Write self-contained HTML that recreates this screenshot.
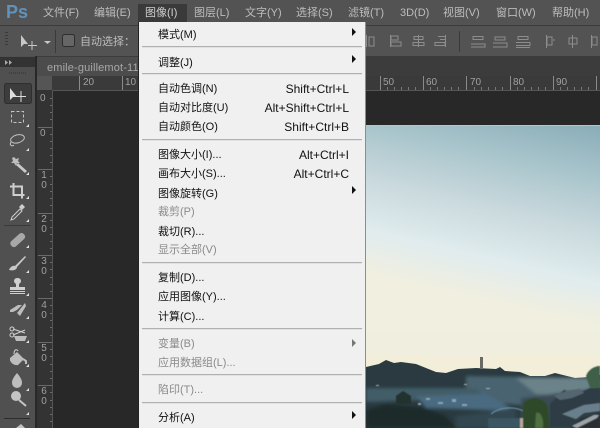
<!DOCTYPE html>
<html><head><meta charset="utf-8">
<style>
html,body{margin:0;padding:0;background:#282828}
#r{position:relative;width:600px;height:428px;overflow:hidden;background:#282828;font-family:"Liberation Sans","Noto Sans CJK SC",sans-serif}
.a{position:absolute}
.t{position:absolute;white-space:nowrap;line-height:14px;height:14px}
.m{font-size:11px;color:#bdbdbd}
.i{font-size:11px;color:#111;left:158px}
.d{color:#8a8a8a}
.s{font-size:12px;color:#111;right:251px}
.sep{position:absolute;left:142px;width:220px;height:1px;background:#b0b0b0;border-bottom:1px solid #e2e2e2}
.ar{position:absolute;left:352px;width:0;height:0;border-left:4px solid #111;border-top:4px solid transparent;border-bottom:4px solid transparent}
.rt{position:absolute;font-size:10px;color:#a0a0a0;line-height:11px;font-family:"Liberation Sans",sans-serif}
</style></head><body><div id="r">
<!-- menu bar -->
<div class="a" style="left:0;top:0;width:600px;height:25px;background:#535353"></div>
<div class="a" style="left:0;top:25px;width:600px;height:1px;background:#3c3c3c"></div>
<div class="a" style="left:0;top:26px;width:600px;height:31px;background:#535353"></div>
<div class="t" style="left:6px;top:2px;height:20px;line-height:20px;font-size:18px;font-weight:bold;color:#5f93bd">Ps</div>
<div class="a" style="left:138px;top:4px;width:49px;height:18px;background:#3a3a3a"></div>
<div class="t m" style="left:43px;top:6px">文件(F)</div>
<div class="t m" style="left:94px;top:6px">编辑(E)</div>
<div class="t m" style="left:145px;top:6px;color:#cfcfcf">图像(I)</div>
<div class="t m" style="left:194px;top:6px">图层(L)</div>
<div class="t m" style="left:245px;top:6px">文字(Y)</div>
<div class="t m" style="left:296px;top:6px">选择(S)</div>
<div class="t m" style="left:348px;top:6px">滤镜(T)</div>
<div class="t m" style="left:400px;top:6px">3D(D)</div>
<div class="t m" style="left:443px;top:6px">视图(V)</div>
<div class="t m" style="left:496px;top:6px">窗口(W)</div>
<div class="t m" style="left:552px;top:6px">帮助(H)</div>
<!-- options bar -->
<svg class="a" style="left:0;top:26px" width="600" height="30">
<g fill="#3a3a3a"><rect x="5" y="6" width="3" height="1"/><rect x="5" y="9" width="3" height="1"/><rect x="5" y="12" width="3" height="1"/><rect x="5" y="15" width="3" height="1"/><rect x="5" y="18" width="3" height="1"/></g>
<path d="M21 9v12l3-3 4 0z" fill="#c8c8c8"/>
<path d="M32 15v9M28 19.500h9" stroke="#c8c8c8" fill="none"/>
<path d="M44 15h7l-3.500 3z" fill="#c8c8c8"/>
<rect x="55" y="4" width="1" height="23" fill="#3a3a3a"/>
<rect x="62.500" y="8.500" width="12" height="12" rx="2" fill="#666" stroke="#2e2e2e"/>
<g stroke="#8d8d8d" fill="none">
<path d="M390.500 9v12M391 10h7v4h-7zM391 16h10v4h-10z"/>
<path d="M418.500 9v12M414 10.500h9v3h-9zM413 16.500h11v3h-11z"/>
<path d="M445.500 9v12M438 10.500h7M440 13.500h5M435 16.500h10v3h-10z"/>
<path d="M473 10.500h10v3h-10zM471 18h14v3h-14"/>
<path d="M495 14h10v-3h-10zM493 17h14v4h-14"/>
<path d="M518 10.500h10v3h-10zM516 16.500h14v3h-14M516 21.500h14"/>
<path d="M546.500 9v13M547 11h5v8h-5zM553 14h2"/>
<path d="M572.500 9v13M569 12h8v6h-8z"/>
<path d="M591.500 9v13M592 11h5v8h-5z"/>
<path d="M369 11h5v9h-5zM366.500 9v12"/>
</g>
<rect x="459" y="5" width="1" height="21" fill="#3a3a3a"/>
</svg>
<div class="t" style="left:80px;top:35px;font-size:11px;color:#bdbdbd">自动选择：</div>
<!-- tab row -->
<div class="a" style="left:0;top:56px;width:600px;height:20px;background:#3c3c3c"></div>
<div class="a" style="left:37px;top:57px;width:110px;height:19px;background:#4c4c4c"></div>
<div class="t" style="left:47px;top:61px;font-size:11px;letter-spacing:.15px;color:#a8a8a8">emile-guillemot-11</div>
<!-- toolbar -->
<div class="a" style="left:0;top:56px;width:35px;height:372px;background:#505050"></div>
<div class="a" style="left:0;top:57px;width:35px;height:10px;background:#333"></div>
<div class="a" style="left:35px;top:56px;width:2px;height:372px;background:#282828"></div>
<svg class="a" style="left:0;top:0" width="37" height="428">
<path d="M5 60l3 2.500-3 2.500zM9 60l3 2.500-3 2.500z" fill="#aaa"/>
<path d="M9 73h17" stroke="#2f2f2f" stroke-dasharray="1 1"/>
<rect x="4.500" y="83.500" width="27" height="20" rx="2" fill="#3c3c3c" stroke="#2f2f2f"/>
<path d="M10 88v12l3-3 4 0z" fill="#ddd"/>
<path d="M21 91v11M16 96.500h10" stroke="#ddd" fill="none"/>
<rect x="11.500" y="111.500" width="12" height="11" fill="none" stroke="#c4c4c4" stroke-dasharray="3 2"/>
<ellipse cx="17.500" cy="139" rx="7" ry="4" fill="none" stroke="#c4c4c4" transform="rotate(-15 17 139)"/>
<path d="M11 142c-2 3 1 5 3 3" fill="none" stroke="#c4c4c4"/>
<path d="M16 165l2-2 9 8-2 2z" fill="#c8c8c8"/>
<path d="M14 157l2 2 3-1-1 3 2 2-3 0-1 3-2-3-3 0 2-2-1-3z" fill="#bdbdbd"/>
<path d="M13.500 183v12h11M10 186.500h12v12" fill="none" stroke="#cfcfcf" stroke-width="2"/>
<path d="M12 217l8-8 2 2-8 8-3 1z" fill="none" stroke="#cfcfcf"/>
<path d="M19 207l3-3 3 3-3 3z" fill="#cfcfcf"/>
<rect x="4" y="225" width="27" height="1" fill="#3a3a3a"/>
<rect x="9" y="237" width="17" height="7" rx="3" fill="#a8a8a8" transform="rotate(-42 17 240)"/>
<path d="M9 270c1-3 4-5 6-4l10-10 1 1-9 10c0 3-4 4-8 3z" fill="#c8c8c8"/>
<rect x="14" y="278" width="7" height="6" rx="3" fill="#cfcfcf"/><rect x="16" y="283" width="3" height="4" fill="#cfcfcf"/><rect x="10" y="287" width="15" height="3" fill="#cfcfcf"/><rect x="10" y="291" width="15" height="1" fill="#cfcfcf"/><rect x="10" y="293" width="15" height="1" fill="#cfcfcf"/>
<path d="M10 310l8-5 4 0-5 5-4 2-3 0zM25 303l-8 10 3 3 6-10z" fill="#bdbdbd"/>
<path d="M13 329l12 4M13 335l12-5" stroke="#cfcfcf" fill="none"/><circle cx="12" cy="329" r="2" fill="none" stroke="#cfcfcf"/><circle cx="12" cy="335" r="2" fill="none" stroke="#cfcfcf"/><path d="M14 336h13l-2 5H16z" fill="#bdbdbd"/>
<path d="M10 358l7-6 7 7-6 6c-4 1-9-3-8-7z" fill="#bdbdbd"/><path d="M14 354c0-5 3-5 4-3" fill="none" stroke="#cfcfcf"/><path d="M23 359l3 2v3" stroke="#bdbdbd" fill="none" stroke-width="2"/>
<path d="M17 373c4 5 5 7 5 10a5 5 0 0 1-10 0c0-3 1-5 5-10z" fill="#bdbdbd"/>
<circle cx="16" cy="396" r="5" fill="#c4c4c4"/><path d="M19 400l7 6" stroke="#c4c4c4" stroke-width="2"/>
<rect x="4" y="418" width="26" height="1" fill="#2c2c2c"/>
<path d="M21 424l4 4h-9z" fill="#c4c4c4"/>
<g fill="#e0e0e0"><path d="M29 127h-3l3-3zM29 151h-3l3-3zM29 175h-3l3-3zM29 199h-3l3-3zM29 222h-3l3-3zM29 248h-3l3-3zM29 273h-3l3-3zM29 296h-3l3-3zM29 319h-3l3-3zM29 343h-3l3-3zM29 367h-3l3-3zM29 391h-3l3-3zM29 415h-3l3-3z"/></g>
</svg>
<!-- rulers -->
<div class="a" style="left:37px;top:76px;width:563px;height:14px;background:#3a3a3a"></div>
<div class="a" style="left:37px;top:76px;width:15px;height:14px;background:#555"></div>
<div class="a" style="left:37px;top:90px;width:563px;height:1px;background:#555"></div>
<div class="a" style="left:37px;top:90px;width:15px;height:338px;background:#333"></div>
<div class="a" style="left:52px;top:90px;width:1px;height:338px;background:#555"></div>
<div class="rt" style="left:83px;top:77px">20</div>
<div class="rt" style="left:125px;top:77px">10</div>
<div class="rt" style="left:383px;top:77px">50</div>
<div class="rt" style="left:426px;top:77px">60</div>
<div class="rt" style="left:470px;top:77px">70</div>
<div class="rt" style="left:513px;top:77px">80</div>
<div class="rt" style="left:556px;top:77px">90</div>
<svg class="a" style="left:0;top:0" width="600" height="428">
<g stroke="#8a8a8a" fill="none">
<path d="M79.500 76v14M122.500 76v14M380.500 76v14M423.500 76v14M466.500 76v14M510.500 76v14M553.500 76v14M596.500 76v14"/>
<path d="M38 127.500h14M38 169.500h14M38 213.500h14M38 255.500h14M38 298.500h14M38 342.500h14M38 385.500h14" stroke="#6a6a6a"/>
<path d="M50 98.500h2M50 105.500h2M50 112.500h2M50 119.500h2M50 134.500h2M50 141.500h2M50 148.500h2M50 155.500h2M50 162.500h2M50 176.500h2M50 184.500h2M50 191.500h2M50 198.500h2M50 205.500h2M50 220.500h2M50 227.500h2M50 234.500h2M50 241.500h2M50 248.500h2M50 262.500h2M50 269.500h2M50 277.500h2M50 284.500h2M50 291.500h2M50 305.500h2M50 313.500h2M50 320.500h2M50 327.500h2M50 335.500h2M50 349.500h2M50 356.500h2M50 364.500h2M50 371.500h2M50 378.500h2M50 392.500h2M50 400.500h2M50 407.500h2M50 414.500h2M50 421.500h2" stroke="#6a6a6a"/>
<path d="M387.500 87v3M394.500 87v3M401.500 87v3M408.500 87v3M415.500 87v3M430.500 87v3M437.500 87v3M444.500 87v3M451.500 87v3M458.500 87v3M474.500 87v3M481.500 87v3M488.500 87v3M495.500 87v3M502.500 87v3M517.500 87v3M524.500 87v3M531.500 87v3M538.500 87v3M545.500 87v3M560.500 87v3M567.500 87v3M574.500 87v3M581.500 87v3M588.500 87v3" stroke="#777"/>
</g></svg>
<div class="rt" style="left:40px;top:93px">0</div>
<div class="rt" style="left:40px;top:128px">0</div>
<div class="rt" style="left:40px;top:171px;width:8px;text-align:center;line-height:10px">1<br>0</div>
<div class="rt" style="left:40px;top:215px;width:8px;text-align:center;line-height:10px">2<br>0</div>
<div class="rt" style="left:40px;top:257px;width:8px;text-align:center;line-height:10px">3<br>0</div>
<div class="rt" style="left:40px;top:301px;width:8px;text-align:center;line-height:10px">4<br>0</div>
<div class="rt" style="left:40px;top:344px;width:8px;text-align:center;line-height:10px">5<br>0</div>
<div class="rt" style="left:40px;top:387px;width:8px;text-align:center;line-height:10px">6<br>0</div>
<!-- photo: svg origin (366,126) -->
<svg class="a" style="left:366px;top:126px" width="234" height="302">
<defs>
<linearGradient id="g" gradientUnits="userSpaceOnUse" x1="234" y1="0" x2="190" y2="190">
<stop offset="0" stop-color="#8aadb8"/><stop offset=".27" stop-color="#a9c5cc"/><stop offset=".52" stop-color="#c8d8dc"/><stop offset=".79" stop-color="#e0ecee"/><stop offset="1" stop-color="#f0efe0"/></linearGradient>
<linearGradient id="v" x1="0" y1="0" x2="0" y2="1"><stop offset="0" stop-color="#f0efe0" stop-opacity="0"/><stop offset="1" stop-color="#f2eeda"/></linearGradient>
<clipPath id="hill"><path d="M0 241L13 238 20 234 28 237 35 236 50 238 60 242 70 246 80 247 92 243 110 242 130 243 134 241 139 245 154 246 164 250 179 250 189 247 209 252 224 251 234 249V302H0z"/></clipPath>
<filter id="b" x="-5%" y="-5%" width="110%" height="110%"><feGaussianBlur stdDeviation="1.500"/></filter>
<filter id="b2" x="-5%" y="-5%" width="110%" height="110%"><feGaussianBlur stdDeviation=".6"/></filter>
</defs>
<rect width="234" height="302" fill="url(#g)"/>
<rect y="160" width="234" height="142" fill="url(#v)"/>
<rect y="230" width="234" height="30" fill="#f2eeda"/>
<g clip-path="url(#hill)">
<rect y="230" width="234" height="72" fill="#2a3a40"/>
<g filter="url(#b)">
<path d="M100 250L234 252V285L100 275z" fill="#4a6470"/>
<path d="M150 252L234 252V272L170 268z" fill="#6a8288"/>
<path d="M0 262H110L120 272 0 276z" fill="#435d68"/>
<path d="M50 270L120 268 150 285 60 282z" fill="#4a6a80"/>
<path d="M0 284L20 278 60 282 80 290 90 302H0z" fill="#1e2a2c"/>
<path d="M90 290L150 282V302H90z" fill="#30474f"/>
<path d="M155 272L234 262V302H155z" fill="#3b4c54"/>
</g>
<g filter="url(#b2)">
<path d="M30 270l7-5 8 5v8H30z" fill="#24302f"/>
<path d="M125 288c7-6 22-9 34-2" fill="none" stroke="#6f98aa"/>
<path d="M122 292h34v10h-34z" fill="#3a5462"/>
<path d="M157 278c8-9 21-7 25 3l2 21h-28z" fill="#2e4a2c"/>
<path d="M170 287c4-2 8 4 7 15h-8z" fill="#4f7040"/>
<path d="M154 292h3v10h-3z" fill="#b8a89a"/>
<path d="M184 278l14-14 14 4 12-6 10-1v40h-50z" fill="#2f3c44"/>
<path d="M196 288l22-9 16-2v8l-16 2-8 6z" fill="#6b7f8c"/>
<path d="M204 302l12-10 18-5v15z" fill="#2b2e30"/>
<path d="M206 300l22-11 5 0-2 3-20 10z" fill="#9aa4a8"/>
<path d="M188 270l12-5 14-2 4 4-12 5-12 2z" fill="#54666f"/>
<g fill="#8ba6b8"><rect x="60" y="272" width="4" height="2"/><rect x="72" y="276" width="5" height="2"/><rect x="86" y="273" width="4" height="3"/><rect x="96" y="278" width="5" height="2"/><rect x="52" y="277" width="3" height="2"/></g>
<g fill="#a8b8bc"><rect x="10" y="259" width="3" height="1"/><rect x="98" y="258" width="3" height="1"/><rect x="120" y="262" width="4" height="1"/></g>
</g>
</g>
<path d="M220 250c2-6 8-10 14-10v22l-10 0z" fill="#3f5f48" filter="url(#b2)"/>
<rect x="114" y="231" width="3" height="12" fill="#6a6a64"/>
</svg>
<div class="a" style="left:365px;top:125px;width:235px;height:1px;background:#b9c4c6"></div>
<!-- menu -->
<div class="a" style="left:138px;top:22px;width:1px;height:406px;background:#222"></div>
<div class="a" style="left:139px;top:22px;width:226px;height:406px;background:#f0f0f0"></div>
<div class="a" style="left:365px;top:22px;width:1px;height:406px;background:#8c8c8c"></div>
<div class="t i" style="top:28px">模式(M)</div><div class="ar" style="top:28px"></div>
<div class="sep" style="top:46px"></div>
<div class="t i" style="top:56px">调整(J)</div><div class="ar" style="top:55px"></div>
<div class="sep" style="top:73px"></div>
<div class="t i" style="top:82px">自动色调(N)</div><div class="t s" style="top:82px">Shift+Ctrl+L</div>
<div class="t i" style="top:101px">自动对比度(U)</div><div class="t s" style="top:101px">Alt+Shift+Ctrl+L</div>
<div class="t i" style="top:120px">自动颜色(O)</div><div class="t s" style="top:120px">Shift+Ctrl+B</div>
<div class="sep" style="top:139px"></div>
<div class="t i" style="top:148px">图像大小(I)...</div><div class="t s" style="top:148px">Alt+Ctrl+I</div>
<div class="t i" style="top:167px">画布大小(S)...</div><div class="t s" style="top:167px">Alt+Ctrl+C</div>
<div class="t i" style="top:187px">图像旋转(G)</div><div class="ar" style="top:186px"></div>
<div class="t i d" style="top:205px">裁剪(P)</div>
<div class="t i" style="top:225px">裁切(R)...</div>
<div class="t i d" style="top:243px">显示全部(V)</div>
<div class="sep" style="top:262px"></div>
<div class="t i" style="top:271px">复制(D)...</div>
<div class="t i" style="top:290px">应用图像(Y)...</div>
<div class="t i" style="top:310px">计算(C)...</div>
<div class="sep" style="top:328px"></div>
<div class="t i d" style="top:337px">变量(B)</div><div class="ar" style="top:339px;border-left-color:#777"></div>
<div class="t i d" style="top:356px">应用数据组(L)...</div>
<div class="sep" style="top:374px"></div>
<div class="t i d" style="top:383px">陷印(T)...</div>
<div class="sep" style="top:402px"></div>
<div class="t i" style="top:411px">分析(A)</div><div class="ar" style="top:411px"></div>
</div></body></html>
